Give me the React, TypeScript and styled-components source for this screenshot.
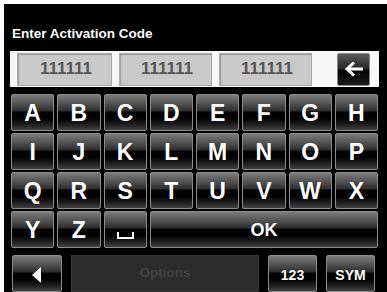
import styled, { createGlobalStyle } from 'styled-components';

const GlobalStyle = createGlobalStyle`
	html, body {
		margin: 0;
		padding: 0;
		background: #fff;
	}
	body {
		font-family: 'Liberation Sans', Arial, sans-serif;
	}
`;

const ROWS = ['ABCDEFGH', 'IJKLMNOP', 'QRSTUVWX'];
const CODES = ['111111', '111111', '111111'];

const App = () => {
	return (
		<>
			<GlobalStyle />
			<Screen>
				<Title>Enter Activation Code</Title>
				<InputPanel>
					{CODES.map((code, id) => (
						<CodeBox key={id} $wide={id === 0}>
							{code}
						</CodeBox>
					))}
					<BackspaceButton>
						<svg width='20' height='16' viewBox='0 0 20 16'>
							<path
								d='M3 8 H19 M10 1.5 L3 8 L10 14.5'
								fill='none'
								stroke='#fff'
								strokeWidth='3'
							/>
						</svg>
					</BackspaceButton>
				</InputPanel>
				<Keyboard>
					{ROWS.map((row) =>
						row.split('').map((letter) => <Key key={letter}>{letter}</Key>)
					)}
					<Key>Y</Key>
					<Key>Z</Key>
					<Key>
						<SpaceGlyph />
					</Key>
					<Key $span={5} $size={18}>
						OK
					</Key>
				</Keyboard>
				<BottomBar>
					<Key $size={14}>
						<svg width='10' height='16' viewBox='0 0 10 16'>
							<path d='M9 0 L0 8 L9 16 Z' fill='#fff' />
						</svg>
					</Key>
					<OptionsField>Options</OptionsField>
					<Key $size={14}>123</Key>
					<Key $size={14}>SYM</Key>
				</BottomBar>
			</Screen>
		</>
	);
};

const Screen = styled.div`
	margin: 4px 0 0 4px;
	width: 383px;
	height: 288px;
	background: #000;
	overflow: hidden;
	display: flex;
	flex-direction: column;
`;

const Title = styled.div`
	margin: 22px 0 0 8px;
	color: #fff;
	font-size: 13.5px;
	font-weight: bold;
	line-height: 16px;
`;

const InputPanel = styled.div`
	margin: 9px 0 0 6px;
	width: 369px;
	height: 39px;
	box-sizing: border-box;
	background: #f7f7f7;
	display: flex;
	align-items: center;
	padding: 0 9px 0 7px;
	gap: 7px;
`;

const CodeBox = styled.div<{ $wide?: boolean }>`
	width: ${(p) => (p.$wide ? 95 : 93)}px;
	height: 33px;
	box-sizing: border-box;
	background: #c9c9c9;
	border: 1px solid #a9a9a9;
	box-shadow: inset 1px 1px 1px #9a9a9a;
	color: #545454;
	font-size: 17px;
	font-weight: bold;
	display: flex;
	align-items: center;
	justify-content: center;
	padding-left: 3px;
`;

const BackspaceButton = styled.div`
	margin-left: auto;
	width: 33px;
	height: 33px;
	box-sizing: border-box;
	border: 1px solid #8a8a8a;
	border-radius: 2px;
	background: linear-gradient(to bottom, #5a5a5a 0%, #2a2a2a 45%, #050505 55%, #1a1a1a 100%);
	display: flex;
	align-items: center;
	justify-content: center;
`;

const Keyboard = styled.div`
	margin: 7px 0 0 7px;
	width: 367px;
	display: grid;
	grid-template-columns: repeat(8, 1fr);
	grid-auto-rows: 37px;
	column-gap: 3px;
	row-gap: 2px;
`;

const Key = styled.div<{ $span?: number; $size?: number }>`
	grid-column: span ${(p) => p.$span ?? 1};
	box-sizing: border-box;
	height: 37px;
	border: 1px solid #8c8c8c;
	border-radius: 2px;
	background: linear-gradient(
		to bottom,
		#7c7c7c 0%,
		#5a5a5a 20%,
		#303030 44%,
		#030303 50%,
		#000 66%,
		#202020 85%,
		#424242 100%
	);
	color: #fff;
	font-size: ${(p) => p.$size ?? 23}px;
	font-weight: bold;
	display: flex;
	align-items: center;
	justify-content: center;
	padding-top: 2px;
`;

const SpaceGlyph = styled.span`
	display: block;
	width: 13px;
	height: 5px;
	margin-top: 10px;
	border: 2px solid #fff;
	border-top: none;
`;

const BottomBar = styled.div`
	margin: 7px 0 0 8px;
	display: grid;
	grid-template-columns: 50px 188px 49px 49px;
	column-gap: 9px;
`;

const OptionsField = styled.div`
	height: 37px;
	box-sizing: border-box;
	background: #2c2c2c;
	border: 1px solid #363636;
	color: #424242;
	font-size: 13.5px;
	font-weight: bold;
	display: flex;
	align-items: center;
	justify-content: center;
	padding-bottom: 2px;
`;

export default App;
